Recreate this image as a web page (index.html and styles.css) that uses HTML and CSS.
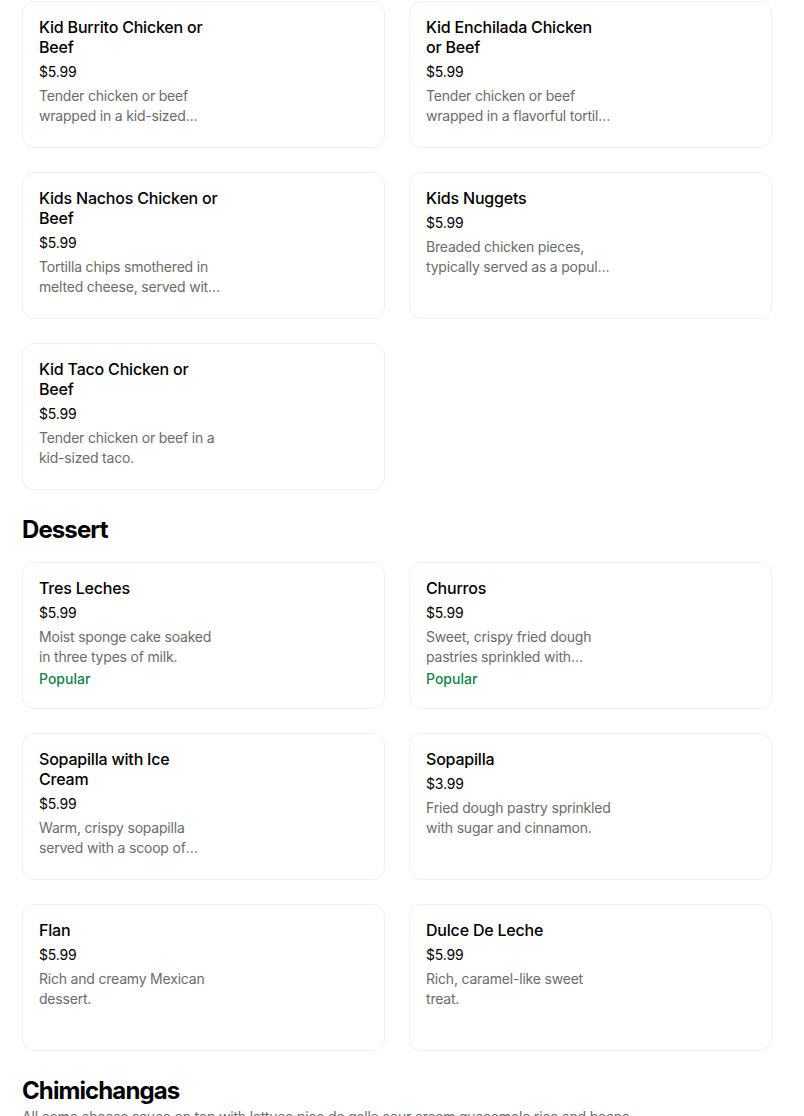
FILE: index.html
```html
<!DOCTYPE html>
<html>
<head>
<meta charset="utf-8">
<link rel="stylesheet" href="styles.css">
</head>
<body>
<main class="menu">
  <section class="grid">
    <div class="card"><div class="info"><div class="title">Kid Burrito Chicken or Beef</div><div class="price">$5.99</div><div class="desc">Tender chicken or beef wrapped in a kid-sized tortilla with cheese.</div></div></div>
    <div class="card"><div class="info"><div class="title">Kid Enchilada Chicken or Beef</div><div class="price">$5.99</div><div class="desc">Tender chicken or beef wrapped in a flavorful tortilla with sauce.</div></div></div>
    <div class="card"><div class="info"><div class="title">Kids Nachos Chicken or Beef</div><div class="price">$5.99</div><div class="desc">Tortilla chips smothered in melted cheese, served with chicken or beef.</div></div></div>
    <div class="card"><div class="info"><div class="title">Kids Nuggets</div><div class="price">$5.99</div><div class="desc">Breaded chicken pieces, typically served as a popular kids meal.</div></div></div>
    <div class="card"><div class="info"><div class="title">Kid Taco Chicken or Beef</div><div class="price">$5.99</div><div class="desc">Tender chicken or beef in a kid-sized taco.</div></div></div>
  </section>

  <h2 class="heading">Dessert</h2>
  <section class="grid">
    <div class="card"><div class="info"><div class="title">Tres Leches</div><div class="price">$5.99</div><div class="desc">Moist sponge cake soaked in three types of milk.</div><div class="tag">Popular</div></div></div>
    <div class="card"><div class="info"><div class="title">Churros</div><div class="price">$5.99</div><div class="desc">Sweet, crispy fried dough pastries sprinkled with cinnamon sugar.</div><div class="tag">Popular</div></div></div>
    <div class="card"><div class="info"><div class="title">Sopapilla with Ice Cream</div><div class="price">$5.99</div><div class="desc">Warm, crispy sopapilla served with a scoop of vanilla ice cream.</div></div></div>
    <div class="card"><div class="info"><div class="title">Sopapilla</div><div class="price">$3.99</div><div class="desc">Fried dough pastry sprinkled with sugar and cinnamon.</div></div></div>
    <div class="card"><div class="info"><div class="title">Flan</div><div class="price">$5.99</div><div class="desc">Rich and creamy Mexican dessert.</div></div></div>
    <div class="card"><div class="info"><div class="title">Dulce De Leche</div><div class="price">$5.99</div><div class="desc">Rich, caramel-like sweet treat.</div></div></div>
  </section>

  <h2 class="heading heading-tight">Chimichangas</h2>
  <p class="section-desc">All come cheese sauce on top with lettuce pico de gallo sour cream guacamole rice and beans</p>
</main>
</body>
</html>
```

FILE: styles.css
```css
html, body {
  margin: 0;
  padding: 0;
  background: #fff;
}
body {
  font-family: Inter, "Noto Sans", sans-serif;
  color: #000;
}
.menu {
  width: 750px;
  padding: 1px 0 0 22px;
}
.grid {
  display: grid;
  grid-template-columns: 1fr 1fr;
  gap: 24px;
}
.card {
  box-sizing: border-box;
  height: 147px;
  border: 1px solid #f1f1f1;
  border-radius: 12px;
  padding: 15px 16px 16px;
}
.info {
  width: 187px;
  display: flex;
  flex-direction: column;
}
.title {
  max-width: 183px;
  font-size: 16px;
  line-height: 20px;
  font-weight: 500;
  letter-spacing: -0.2px;
  color: #000;
}
.price {
  font-size: 14px;
  line-height: 20px;
  margin-top: 5px;
  letter-spacing: -0.2px;
  color: #000;
}
.desc {
  font-size: 14px;
  line-height: 20px;
  margin-top: 4px;
  letter-spacing: -0.2px;
  color: #6b6b6b;
  display: -webkit-box;
  -webkit-line-clamp: 2;
  -webkit-box-orient: vertical;
  overflow: hidden;
}
.tag {
  font-size: 14px;
  line-height: 20px;
  margin-top: 2px;
  font-weight: 500;
  color: #0e8345;
}
.heading {
  margin: 24px 0 16px;
  font-size: 24px;
  line-height: 32px;
  font-weight: 700;
  letter-spacing: -0.9px;
}
.heading-tight {
  margin-bottom: 0;
}
.section-desc {
  margin: 0;
  font-size: 14px;
  line-height: 20px;
  letter-spacing: -0.2px;
  color: #6b6b6b;
}
```
